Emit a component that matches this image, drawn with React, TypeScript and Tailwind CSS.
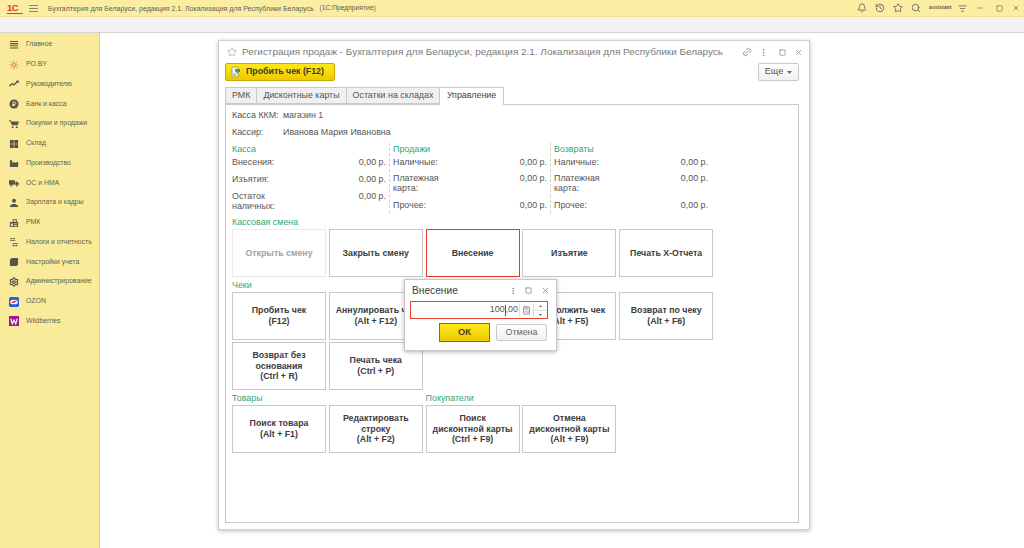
import { Bell, Calculator, History, Link2, MoreVertical, Search, Settings, Square, Star, X, Minus, ListFilter } from "lucide-react";

const navItems = [
  "Главное",
  "РО.BY",
  "Руководителю",
  "Банк и касса",
  "Покупки и продажи",
  "Склад",
  "Производство",
  "ОС и НМА",
  "Зарплата и кадры",
  "РМК",
  "Налоги и отчетность",
  "Настройки учета",
  "Администрирование",
  "OZON",
  "Wildberries",
];

function NavIcon({ index }: { index: number }) {
  const c = "#55554a";
  if (index === 12) return <Settings size={10} strokeWidth={3} color={c} />;
  if (index === 13)
    return (
      <svg width="10" height="10" viewBox="0 0 11 11">
        <rect width="11" height="11" rx="2" fill="#1f5fe0" />
        <ellipse cx="5.5" cy="5.5" rx="4.2" ry="2.6" fill="#fff" />
        <path d="M2.5 6.5 C4 4 7 4 8.5 4.5 C7.5 6.5 4.5 7 2.5 6.5Z" fill="#e8323c" />
      </svg>
    );
  if (index === 14)
    return (
      <svg width="10" height="10" viewBox="0 0 11 11">
        <rect width="11" height="11" fill="#9a1a8f" />
        <path d="M2 3 L3.6 8.5 L5.5 4.5 L7.4 8.5 L9 3" fill="none" stroke="#fff" strokeWidth="1.3" />
      </svg>
    );
  return (
    <svg width="10" height="10" viewBox="0 0 11 11" fill={c}>
      {index === 0 && <path d="M1 1h9v1.2H1zM1 3.4h9v1.2H1zM1 5.8h9v1.2H1zM1 8.2h9v1.2H1z" />}
      {index === 1 && (
        <g stroke="#e8734a" strokeWidth="0.9" fill="none">
          <circle cx="5.5" cy="5.5" r="1.6" />
          <path d="M5.5 0.5v3M5.5 7.5v3M0.5 5.5h3M7.5 5.5h3M2 2l2 2M7 7l2 2M9 2L7 4M4 7L2 9" />
        </g>
      )}
      {index === 2 && <path d="M0.5 8 L3.5 5 L5.5 6.5 L9 3 M8 2.5h2v2" fill="none" stroke={c} strokeWidth="1.5" />}
      {index === 3 && (
        <>
          <circle cx="5.5" cy="5.5" r="5" />
          <path d="M4.5 8V3.2h1.7a1.3 1.3 0 0 1 0 2.8H3.5M3.5 7h3" fill="none" stroke="#faeb9b" strokeWidth="1" />
        </>
      )}
      {index === 4 && (
        <>
          <path d="M0 1.5h2l.5 1.2H11L9.6 7H3.2L1.4 2.6H0z" />
          <circle cx="4" cy="9" r="1.1" />
          <circle cx="8.5" cy="9" r="1.1" />
        </>
      )}
      {index === 5 && <path d="M1 1h4.2v4.2H1zM5.8 1H10v4.2H5.8zM1 5.8h4.2V10H1zM5.8 5.8H10V10H5.8z" />}
      {index === 6 && <path d="M1 10V2.5h2.5v3L6.5 4v1.5L10 4v6z" />}
      {index === 7 && (
        <>
          <path d="M0 2.5h6.5v5H0zM7 4h2l2 2v1.5H7z" />
          <circle cx="2.5" cy="8.3" r="1.1" />
          <circle cx="8.5" cy="8.3" r="1.1" />
        </>
      )}
      {index === 8 && (
        <>
          <circle cx="5.5" cy="3" r="2.2" />
          <path d="M1 10V8.4L4 6.5h3L10 8.4V10z" />
        </>
      )}
      {index === 9 && (
        <path fillRule="evenodd" d="M4 1h4.5v3H10v6H1V4.5h3zM5 2v2h2.5V2zM2.2 6v3h2V6zM5.4 6v1h3.4V6zM5.4 8v1h3.4V8z" />
      )}
      {index === 10 && <path d="M1.5 1h2v1.6h-2zM4.5 1h2v1.6h-2zM1 3.4h6v.7H1zM4 7h6v.7H4zM4 8.5h2v1.6H4zM7 8.5h2v1.6H7z" />}
      {index === 11 && <path d="M3 1h7v7.5L8 10H1V3z" />}
    </svg>
  );
}

function Topbar() {
  return (
    <div className="flex h-[17px] items-center border-b border-[#f3e08a] bg-[#fbeda2] text-[#5f5f54]">
      <div className="ml-[7px] flex h-[11px] w-[16px] flex-col">
        <span className="text-[9.5px] font-bold leading-[9px] tracking-[-0.5px] text-[#dc3a24]">1С</span>
        <div className="mt-px h-[1.5px] w-full bg-[#dc3a24]" />
      </div>
      <div className="ml-[6px] flex w-[19px] flex-col gap-[2px]">
        <div className="h-px w-[9px] bg-[#85857a]" />
        <div className="h-px w-[9px] bg-[#85857a]" />
        <div className="h-px w-[9px] bg-[#85857a]" />
      </div>
      <div className="text-[7px] leading-none">Бухгалтерия для Беларуси, редакция 2.1. Локализация для Республики Беларусь</div>
      <div className="ml-[6px] text-[6.7px] leading-none">(1С:Предприятие)</div>
      <div className="ml-auto flex items-center">
        <Bell size={10} className="mr-[8px]" />
        <History size={10} className="mr-[8px]" />
        <Star size={10} className="mr-[8px]" />
        <Search size={10} className="mr-[8px]" />
        <span className="mr-[6px] w-[23px] text-[5.2px] font-bold leading-none">assistant</span>
        <ListFilter size={9} className="mr-[9px]" />
        <Minus size={8} className="mr-[12px]" />
        <Square size={7} className="mr-[9px]" />
        <X size={8} className="mr-[4px]" />
      </div>
    </div>
  );
}

function Sidebar() {
  return (
    <div className="w-[100px] shrink-0 border-r border-[#d9cf94] bg-[#faeb9b] pt-[2px]">
      {navItems.map((item, i) => (
        <div key={item} className="flex h-[19.75px] items-center pl-[9px] text-[#5f5f50]">
          <div className="flex w-[17px] items-center">
            <NavIcon index={i} />
          </div>
          <span className="text-[6.9px] leading-none">{item}</span>
        </div>
      ))}
    </div>
  );
}

function Tab({ label, active }: { label: string; active?: boolean }) {
  return (
    <div
      className={
        active
          ? "relative -mb-px flex h-[18px] items-center border border-b-0 border-l-0 border-[#c9c9c9] bg-white px-[6.5px] pb-px text-[#444]"
          : "flex h-[17px] items-center border border-l-0 border-[#c9c9c9] bg-[#f0f0f0] px-[6px] text-[#555] first:border-l"
      }
    >
      {label}
    </div>
  );
}

function TotalsColumn({
  title,
  rows,
  divider,
}: {
  title: string;
  rows: { label: string[]; rowClass: string }[];
  divider?: boolean;
}) {
  return (
    <div className={divider ? "w-[161px] border-l border-dashed border-[#cfcfcf] pl-[3px]" : "w-[157px]"}>
      <div className="h-[12px] leading-[12px] text-[#2fa873]">{title}</div>
      {rows.map((row) => (
        <div key={row.label[0]} className={"flex justify-between pr-[3px] " + row.rowClass}>
          <div className="pt-[2px] leading-[10px]">
            {row.label.map((l) => (
              <div key={l}>{l}</div>
            ))}
          </div>
          <div className="pt-[2px] leading-[10px]">0,00 р.</div>
        </div>
      ))}
    </div>
  );
}

function ActionButton({ lines, dim, red }: { lines: string[]; dim?: boolean; red?: boolean }) {
  let cls = "border-[#c8c8c8] text-[#3c3c3c]";
  if (dim) cls = "border-[#eaeaea] text-[#a2a2a2]";
  if (red) cls = "border-[#e0392b] text-[#3c3c3c]";
  return (
    <div className={"flex h-[48px] w-[94px] flex-col items-center justify-center border bg-white text-center text-[8.8px] font-bold leading-[10.6px] " + cls}>
      {lines.map((l) => (
        <div key={l}>{l}</div>
      ))}
    </div>
  );
}

function GroupLabel({ text }: { text: string }) {
  return <div className="h-[14px] leading-[14px] text-[#2fa873]">{text}</div>;
}

function SalesForm() {
  return (
    <div className="ml-[118px] mt-[7px] flex h-[490px] w-[592px] flex-col border border-[#cfcfcf] bg-white pl-[6px] pr-[10px] shadow-[0_1px_4px_rgba(0,0,0,0.25)]">
      <div className="flex h-[22px] items-center text-[9.95px] text-[#7a7a7a]">
        <Star size={10} className="ml-[2px] mr-[5px] text-[#b5b5b5]" />
        <span>Регистрация продаж - Бухгалтерия для Беларуси, редакция 2.1. Локализация для Республики Беларусь</span>
        <Link2 size={10} className="ml-auto mr-[7px] -rotate-45 text-[#888]" />
        <MoreVertical size={9} className="mr-[11px] text-[#888]" />
        <Square size={7} className="mr-[8px] text-[#666]" />
        <X size={9} className="-mr-[4px] text-[#888]" />
      </div>
      <div className="flex items-start">
        <div className="flex h-[18px] w-[110px] items-center rounded-[2px] border border-[#c9a800] bg-gradient-to-b from-[#ffe81a] to-[#ecc900] pl-[4px] text-[8.8px] font-bold text-[#3c3c20]">
          <svg width="12" height="12" viewBox="0 0 12 12" className="mr-[4px] shrink-0">
            <path d="M2 1h6v10H2z" fill="#f4f4e8" stroke="#8c8c70" strokeWidth="0.7" />
            <path d="M5 3h5v3H8v2L5 5z" fill="#3da060" />
            <path d="M3 8h3M3 9.5h3" stroke="#8c8c70" strokeWidth="0.7" />
          </svg>
          Пробить чек (F12)
        </div>
        <div className="ml-auto flex h-[18px] w-[41px] items-center justify-center rounded-[2px] border border-[#c9c9c9] bg-gradient-to-b from-white to-[#f0f0f0] text-[9px] text-[#555]">
          Еще
          <svg width="5" height="3" viewBox="0 0 5 3" className="ml-[4px]">
            <path d="M0 0h5L2.5 3z" fill="#666" />
          </svg>
        </div>
      </div>
      <div className="mt-[6px] flex text-[8.9px]">
        <Tab label="РМК" />
        <Tab label="Дисконтные карты" />
        <Tab label="Остатки на складах" />
        <Tab label="Управление" active />
      </div>
      <div className="mb-[6px] flex-1 border border-[#c9c9c9] pl-[6px] pt-[4px] text-[8.9px] text-[#555]">
        <div className="flex h-[13px] items-center">
          <span className="w-[51px]">Касса ККМ:</span>
          <span>магазин 1</span>
        </div>
        <div className="mt-[4px] flex h-[13px] items-center">
          <span className="w-[51px]">Кассир:</span>
          <span>Иванова Мария Ивановна</span>
        </div>
        <div className="mt-[4px] flex h-[70px]">
          <TotalsColumn
            title="Касса"
            rows={[
              { label: ["Внесения:"], rowClass: "h-[17px]" },
              { label: ["Изъятия:"], rowClass: "h-[17px]" },
              { label: ["Остаток", "наличных:"], rowClass: "h-[24px]" },
            ]}
          />
          <TotalsColumn
            divider
            title="Продажи"
            rows={[
              { label: ["Наличные:"], rowClass: "h-[16px]" },
              { label: ["Платежная", "карта:"], rowClass: "h-[27px]" },
              { label: ["Прочее:"], rowClass: "h-[14px]" },
            ]}
          />
          <TotalsColumn
            divider
            title="Возвраты"
            rows={[
              { label: ["Наличные:"], rowClass: "h-[16px]" },
              { label: ["Платежная", "карта:"], rowClass: "h-[27px]" },
              { label: ["Прочее:"], rowClass: "h-[14px]" },
            ]}
          />
        </div>
        <div className="mt-[2px]">
          <GroupLabel text="Кассовая смена" />
        </div>
        <div className="flex gap-[2.8px]">
          <ActionButton dim lines={["Открыть смену"]} />
          <ActionButton lines={["Закрыть смену"]} />
          <ActionButton red lines={["Внесение"]} />
          <ActionButton lines={["Изъятие"]} />
          <ActionButton lines={["Печать Х-Отчета"]} />
        </div>
        <div className="mt-[1px]">
          <GroupLabel text="Чеки" />
        </div>
        <div className="flex flex-wrap gap-x-[2.8px] gap-y-[2px]">
          <ActionButton lines={["Пробить чек", "(F12)"]} />
          <ActionButton lines={["Аннулировать чек", "(Alt + F12)"]} />
          <ActionButton lines={["Отложить чек", "(Alt + F4)"]} />
          <ActionButton lines={["Продолжить чек", "(Alt + F5)"]} />
          <ActionButton lines={["Возврат по чеку", "(Alt + F6)"]} />
          <ActionButton lines={["Возврат без", "основания", "(Ctrl + R)"]} />
          <ActionButton lines={["Печать чека", "(Ctrl + P)"]} />
        </div>
        <div className="mt-[1px] flex">
          <div className="w-[193.6px]">
            <GroupLabel text="Товары" />
          </div>
          <GroupLabel text="Покупатели" />
        </div>
        <div className="flex gap-[2.8px]">
          <ActionButton lines={["Поиск товара", "(Alt + F1)"]} />
          <ActionButton lines={["Редактировать", "строку", "(Alt + F2)"]} />
          <ActionButton lines={["Поиск", "дисконтной карты", "(Ctrl + F9)"]} />
          <ActionButton lines={["Отмена", "дисконтной карты", "(Alt + F9)"]} />
        </div>
      </div>
    </div>
  );
}

function DepositDialog() {
  return (
    <div className="absolute left-[304px] top-[246px] h-[72px] w-[153px] border border-[#c8c8c8] bg-white px-[5px] shadow-[0_1px_4px_rgba(0,0,0,0.3)]">
      <div className="flex h-[21px] items-center pl-[2px] text-[10.2px] text-[#3c3c3c]">
        Внесение
        <MoreVertical size={8} className="ml-auto mr-[8px] text-[#777]" />
        <Square size={7} className="mr-[9px] text-[#666]" />
        <X size={9} className="mr-[1px] text-[#777]" />
      </div>
      <div className="flex h-[18px] w-[138px] items-center border border-[#e8402f] text-[8.9px] text-[#555]">
        <span className="ml-auto">100</span>
        <span className="h-[11px] w-px bg-[#555]" />
        <span className="mr-[1px]">,00</span>
        <div className="flex h-[14px] w-[14px] items-center justify-center border-l border-[#ddd]">
          <Calculator size={9} className="text-[#777]" />
        </div>
        <div className="flex h-[14px] w-[14px] flex-col items-center justify-center gap-[3px] border-l border-[#ddd]">
          <svg width="3" height="2" viewBox="0 0 3 2">
            <path d="M1.5 0L3 2H0z" fill="#666" />
          </svg>
          <div className="h-px w-full bg-[#ddd]" />
          <svg width="3" height="2" viewBox="0 0 3 2">
            <path d="M0 0h3L1.5 2z" fill="#666" />
          </svg>
        </div>
      </div>
      <div className="mt-[4px] flex items-center">
        <div className="ml-[29px] flex h-[19px] w-[51px] items-center justify-center border border-[#e0392b] bg-gradient-to-b from-[#ffe81a] to-[#ecc900] text-[9.4px] font-bold text-[#4a4520]">
          ОК
        </div>
        <div className="ml-[6px] flex h-[17px] w-[51px] items-center justify-center rounded-[2px] border border-[#c9c9c9] bg-gradient-to-b from-white to-[#efefef] text-[8.9px] text-[#666]">
          Отмена
        </div>
      </div>
    </div>
  );
}

export default function App() {
  return (
    <div className="flex h-[548px] w-[1024px] flex-col overflow-hidden bg-white font-['Liberation_Sans',sans-serif]">
      <Topbar />
      <div className="h-[16px] border-b border-[#d4d4d4] bg-[#f1f1f1]" />
      <div className="flex flex-1">
        <Sidebar />
        <div className="relative flex-1">
          <SalesForm />
          <DepositDialog />
        </div>
      </div>
    </div>
  );
}
